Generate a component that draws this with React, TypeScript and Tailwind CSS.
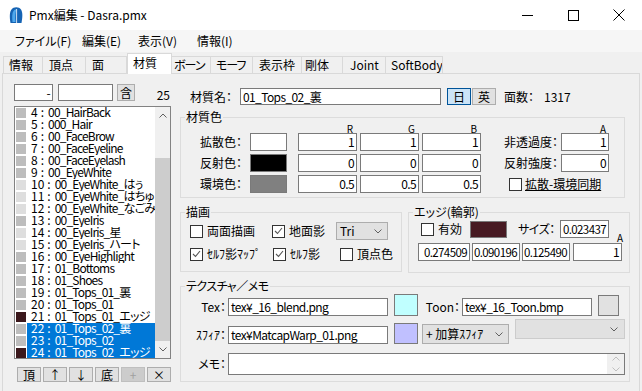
import type { ReactNode } from 'react'

type Mat = { n: number; name: string; sw: string; sel?: boolean }

const MATS: Mat[] = [
  { n: 4, name: '00_HairBack', sw: 'bg-[#bdbdbd]' },
  { n: 5, name: '000_Hair', sw: 'bg-[#bdbdbd]' },
  { n: 6, name: '00_FaceBrow', sw: 'bg-[#bdbdbd]' },
  { n: 7, name: '00_FaceEyeline', sw: 'bg-[#bdbdbd]' },
  { n: 8, name: '00_FaceEyelash', sw: 'bg-[#bdbdbd]' },
  { n: 9, name: '00_EyeWhite', sw: 'bg-[#bdbdbd]' },
  { n: 10, name: '00_EyeWhite_はぅ', sw: 'bg-[#dedede]' },
  { n: 11, name: '00_EyeWhite_はちゅ目', sw: 'bg-[#dedede]' },
  { n: 12, name: '00_EyeWhite_なごみ', sw: 'bg-[#dedede]' },
  { n: 13, name: '00_EyeIris', sw: 'bg-[#bdbdbd]' },
  { n: 14, name: '00_EyeIris_星', sw: 'bg-[#dedede]' },
  { n: 15, name: '00_EyeIris_ハート', sw: 'bg-[#dedede]' },
  { n: 16, name: '00_EyeHighlight', sw: 'bg-[#bdbdbd]' },
  { n: 17, name: '01_Bottoms', sw: 'bg-[#bdbdbd]' },
  { n: 18, name: '01_Shoes', sw: 'bg-[#bdbdbd]' },
  { n: 19, name: '01_Tops_01_裏', sw: 'bg-[#bdbdbd]' },
  { n: 20, name: '01_Tops_01', sw: 'bg-[#bdbdbd]' },
  { n: 21, name: '01_Tops_01_エッジ', sw: 'bg-[#3b181c]' },
  { n: 22, name: '01_Tops_02_裏', sw: 'bg-[#bdbdbd]', sel: true },
  { n: 23, name: '01_Tops_02', sw: 'bg-[#bdbdbd]', sel: true },
  { n: 24, name: '01_Tops_02_エッジ', sw: 'bg-[#3b181c]', sel: true },
]

const TABS = [
  { t: '情報', w: 'w-[40px] pl-[5px]' },
  { t: '頂点', w: 'w-[43px] pl-[6px]' },
  { t: '面', w: 'w-[41px] pl-[6px]' },
  { t: '材質', w: 'w-[45px] pl-[5px]', sel: true },
  { t: 'ボーン', w: 'w-[39px] pl-[2px] tracking-[-1px]' },
  { t: 'モーフ', w: 'w-[42px] pl-[5px] tracking-[-1px]' },
  { t: '表示枠', w: 'w-[49px] pl-[6px]' },
  { t: '剛体', w: 'w-[41px] pl-[3px]' },
  { t: 'Joint', w: 'w-[43px] pl-[7px]' },
  { t: 'SoftBody', w: 'w-[57px] pl-[5px]' },
]

function Chevron({ up, color = '#606060' }: { up?: boolean; color?: string }) {
  return (
    <svg width="8" height="5" viewBox="0 0 8 5">
      <path d={up ? 'M0.5 4.5 L4 1 L7.5 4.5' : 'M0.5 0.5 L4 4 L7.5 0.5'} fill="none" stroke={color} />
    </svg>
  )
}

function Field({ className = '', right, children }: { className?: string; right?: boolean; children?: ReactNode }) {
  return (
    <div
      className={`border border-[#7a7a7a] bg-white flex items-center overflow-hidden whitespace-nowrap shrink-0 tracking-[-0.6px] ${right ? 'justify-end pr-[2px]' : 'pl-[2px]'} ${className}`}
    >
      {children}
    </div>
  )
}

function Btn({ className = '', children }: { className?: string; children?: ReactNode }) {
  return (
    <div className={`border border-[#adadad] bg-[#e1e1e1] flex items-center justify-center shrink-0 ${className}`}>
      {children}
    </div>
  )
}

function Check({ on }: { on?: boolean }) {
  return (
    <span className="w-[13px] h-[13px] border border-[#333333] bg-white flex items-center justify-center shrink-0">
      {on && (
        <svg width="9" height="8" viewBox="0 0 9 8">
          <path d="M1 4 L3.5 6.5 L8 1" fill="none" stroke="#555555" strokeWidth="1.1" />
        </svg>
      )}
    </span>
  )
}

function Combo({ className = '', children }: { className?: string; children?: ReactNode }) {
  return (
    <div className={`border border-[#adadad] bg-[#e1e1e1] flex items-center pl-[3px] pr-[5px] shrink-0 ${className}`}>
      <span className="flex-1 whitespace-nowrap">{children}</span>
      <Chevron />
    </div>
  )
}

function Swatch({ className = '' }: { className?: string }) {
  return <div className={`border border-[#7a7a7a] shrink-0 ${className}`} />
}

function TitleBar() {
  return (
    <div className="h-[30px] bg-white flex items-center shrink-0">
      <svg className="ml-[8px]" width="16" height="18" viewBox="0 0 16 18">
        <path d="M2.5 17 C1.5 11 1.5 6 3.5 3.5 C5.5 0.5 11 0.5 13 3.5 C15 6.5 14.5 12 13.5 17 Z" fill="#1664b4" />
        <path d="M4.5 16 C4 11 4 7 5.5 5 C6.5 3.5 8 3.3 8.6 3.6 C7.3 6 7 11 7.5 16 Z" fill="#4fa8ec" />
        <path d="M8.6 3 L8.6 17" stroke="#ffffff" strokeWidth="0.8" />
      </svg>
      <span className="ml-[5px]">Pmx編集 - Dasra.pmx</span>
      <div className="ml-auto flex h-full">
        <div className="w-[46px] flex items-center justify-center">
          <svg width="11" height="11" viewBox="0 0 11 11">
            <path d="M0 5.5 H11" stroke="#000" />
          </svg>
        </div>
        <div className="w-[46px] flex items-center justify-center">
          <svg width="11" height="11" viewBox="0 0 11 11">
            <rect x="0.5" y="0.5" width="10" height="10" fill="none" stroke="#000" />
          </svg>
        </div>
        <div className="w-[46px] flex items-center justify-center">
          <svg width="12" height="12" viewBox="0 0 12 12">
            <path d="M0.5 0.5 L11.5 11.5 M11.5 0.5 L0.5 11.5" stroke="#000" />
          </svg>
        </div>
      </div>
    </div>
  )
}

function MenuBar() {
  return (
    <div className="h-[22px] bg-[#f6f6f6] flex items-center shrink-0 pl-[8px]">
      <span className="w-[67px] pl-[7px]">ファイル(F)</span>
      <span className="w-[56px] pl-[7px]">編集(E)</span>
      <span className="w-[59px] pl-[7px]">表示(V)</span>
      <span className="w-[60px] pl-[7px]">情報(I)</span>
    </div>
  )
}

function TabStrip() {
  return (
    <div className="h-[21px] flex items-end pl-[3px] shrink-0">
      {TABS.map((tab) =>
        tab.sel ? (
          <div
            key={tab.t}
            className={`${tab.w} h-[21px] -mb-px relative z-10 bg-white border border-b-0 border-[#d9d9d9] pt-[2px] whitespace-nowrap`}
          >
            {tab.t}
          </div>
        ) : (
          <div
            key={tab.t}
            className={`${tab.w} h-[17px] border border-b-0 border-l-0 first:border-l border-[#d9d9d9] leading-[16px] whitespace-nowrap overflow-hidden`}
          >
            {tab.t}
          </div>
        ),
      )}
    </div>
  )
}

function MaterialList() {
  return (
    <div className="ml-[11px] mt-[10px] w-[158px] flex flex-col shrink-0">
      <div className="flex items-center h-[17px]">
        <Field className="w-[39px] h-[17px]" right>
          -
        </Field>
        <Field className="ml-[5px] w-[55px] h-[17px]" />
        <Btn className="ml-[4px] w-[18px] h-[17px]">含</Btn>
        <span className="ml-auto mr-[2px] self-end leading-[12px]">25</span>
      </div>
      <div className="mt-[5px] w-[157px] h-[253px] border border-[#828282] bg-white flex">
        <div className="w-[140px] flex flex-col overflow-hidden">
          {MATS.map((m) => (
            <div key={m.n} className="h-[12px] flex items-center shrink-0">
              <span className={`ml-[1px] w-[10px] h-[10px] shrink-0 ${m.sw}`} />
              <span
                className={`ml-[1px] flex-1 h-[12px] pl-[4px] whitespace-nowrap overflow-hidden leading-[10px] ${m.sel ? 'bg-[#0078d7] text-white' : ''}`}
              >
                {m.n}
                <span className="ml-[3px] mr-[4px]">:</span>
                <span className="tracking-[-0.8px]">{m.name}</span>
              </span>
            </div>
          ))}
        </div>
        <div className="w-[15px] bg-[#f0f0f0] flex flex-col">
          <div className="h-[17px] flex items-center justify-center">
            <Chevron up />
          </div>
          <div className="h-[34px]" />
          <div className="flex-1 bg-[#cdcdcd]" />
          <div className="h-[17px] flex items-center justify-center">
            <Chevron />
          </div>
        </div>
      </div>
      <div className="mt-[8px] ml-[3px] flex gap-[2px]">
        <Btn className="w-[24px] h-[15px]">頂</Btn>
        <Btn className="w-[24px] h-[15px]">↑</Btn>
        <Btn className="w-[24px] h-[15px]">↓</Btn>
        <Btn className="w-[24px] h-[15px]">底</Btn>
        <div className="w-[24px] h-[15px] border border-[#bfbfbf] bg-[#cccccc] text-[#a0a0a0] flex items-center justify-center">+</div>
        <Btn className="w-[24px] h-[15px]">×</Btn>
      </div>
    </div>
  )
}

function ColorRow({ label, sw, vals, children }: { label: string; sw: string; vals: string[]; children: ReactNode }) {
  return (
    <div className="h-[18px] flex items-center">
      <span className="w-[61px] text-right">{label}</span>
      <Swatch className={`ml-[8px] w-[37px] h-[18px] ${sw}`} />
      <Field className="ml-[11px] w-[59px] h-[18px]" right>
        {vals[0]}
      </Field>
      <Field className="ml-[3px] w-[59px] h-[18px]" right>
        {vals[1]}
      </Field>
      <Field className="ml-[3px] w-[59px] h-[18px]" right>
        {vals[2]}
      </Field>
      {children}
    </div>
  )
}

function MaterialEditor() {
  return (
    <div className="ml-[8px] w-[450px] flex flex-col shrink-0">
      <div className="mt-[14px] h-[17px] flex items-center">
        <span className="ml-[10px] w-[48px]">材質名：</span>
        <Field className="ml-[2px] w-[201px] h-[17px]">01_Tops_02_裏</Field>
        <div className="ml-[6px] w-[24px] h-[17px] border border-[#005499] bg-[#cce4f7] flex items-center justify-center">日</div>
        <Btn className="ml-[1px] w-[24px] h-[17px]">英</Btn>
        <span className="ml-[8px]">面数：</span>
        <span className="ml-[10px]">1317</span>
      </div>

      <fieldset className="mt-[5px] w-[445px] h-[88px] min-w-0 border border-[#dcdcdc]">
        <legend className="ml-[4px] px-[1px] leading-[14px]">材質色</legend>
        <div className="h-[9px] flex text-[10px] leading-[9px]">
          <span className="ml-[117px] w-[59px] text-right pr-[4px]">R</span>
          <span className="ml-[3px] w-[59px] text-right pr-[4px]">G</span>
          <span className="ml-[3px] w-[59px] text-right pr-[4px]">B</span>
          <span className="ml-[80px] w-[48px] text-right pr-[3px]">A</span>
        </div>
        <ColorRow label="拡散色：" sw="bg-white" vals={['1', '1', '1']}>
          <span className="w-[77px] text-right">非透過度：</span>
          <Field className="ml-[3px] w-[48px] h-[18px]" right>
            1
          </Field>
        </ColorRow>
        <div className="mt-[3px]">
          <ColorRow label="反射色：" sw="bg-black" vals={['0', '0', '0']}>
            <span className="w-[77px] text-right">反射強度：</span>
            <Field className="ml-[3px] w-[48px] h-[18px]" right>
              0
            </Field>
          </ColorRow>
        </div>
        <div className="mt-[3px]">
          <ColorRow label="環境色：" sw="bg-[#808080]" vals={['0.5', '0.5', '0.5']}>
            <span className="ml-[28px]">
              <Check />
            </span>
            <span className="ml-[3px] underline">拡散-環境同期</span>
          </ColorRow>
        </div>
      </fieldset>

      <div className="mt-[7px] flex items-start">
        <fieldset className="w-[222px] h-[67px] min-w-0 border border-[#dcdcdc] shrink-0">
          <legend className="ml-[4px] px-[1px] leading-[14px]">描画</legend>
          <div className="mt-[3px] h-[18px] flex items-center">
            <div className="ml-[9px] w-[82px] flex items-center">
              <Check />
              <span className="ml-[4px]">両面描画</span>
            </div>
            <div className="w-[64px] flex items-center">
              <Check on />
              <span className="ml-[4px]">地面影</span>
            </div>
            <Combo className="w-[52px] h-[18px]">Tri</Combo>
          </div>
          <div className="mt-[5px] h-[18px] flex items-center">
            <div className="ml-[9px] w-[83px] flex items-center">
              <Check on />
              <span className="ml-[4px] whitespace-nowrap">ｾﾙﾌ影ﾏｯﾌﾟ</span>
            </div>
            <div className="w-[67px] flex items-center">
              <Check on />
              <span className="ml-[4px]">ｾﾙﾌ影</span>
            </div>
            <div className="flex items-center">
              <Check />
              <span className="ml-[4px]">頂点色</span>
            </div>
          </div>
        </fieldset>

        <fieldset className="ml-[6px] w-[222px] h-[68px] min-w-0 border border-[#dcdcdc] shrink-0">
          <legend className="ml-[4px] px-[1px] leading-[14px]">エッジ(輪郭)</legend>
          <div className="mt-[1px] h-[18px] flex items-center">
            <div className="ml-[12px] w-[49px] flex items-center">
              <Check />
              <span className="ml-[4px]">有効</span>
            </div>
            <Swatch className="w-[37px] h-[17px] bg-[#471a22]" />
            <span className="ml-[11px] w-[40px] whitespace-nowrap tracking-[-0.5px]">サイズ：</span>
            <Field className="ml-[2px] w-[49px] h-[18px] text-[11.5px]" right>
              0.023437
            </Field>
            <span className="ml-[8px] self-end -mb-[4px] text-[10px] leading-[9px]">A</span>
          </div>
          <div className="mt-[5px] h-[18px] flex items-center">
            <Field className="ml-[9px] w-[52px] h-[18px] text-[11.5px]" right>
              0.274509
            </Field>
            <Field className="ml-[2px] w-[48px] h-[18px] text-[11.5px]" right>
              0.090196
            </Field>
            <Field className="ml-[2px] w-[48px] h-[18px] text-[11.5px]" right>
              0.125490
            </Field>
            <Field className="ml-[3px] w-[49px] h-[18px]" right>
              1
            </Field>
          </div>
        </fieldset>
      </div>

      <fieldset className="mt-[6px] w-[450px] h-[103px] min-w-0 border border-[#dcdcdc]">
        <legend className="ml-[4px] px-[1px] leading-[14px] tracking-[-0.5px]">テクスチャ／メモ</legend>
        <div className="mt-[1px] h-[22px] flex items-end">
          <span className="w-[45px] h-[18px] flex items-center justify-end">Tex：</span>
          <Field className="ml-[2px] w-[160px] h-[18px]">tex¥_16_blend.png</Field>
          <Swatch className="ml-[6px] w-[24px] h-[22px] bg-[#c0ffff]" />
          <span className="w-[42px] h-[18px] flex items-center justify-end">Toon：</span>
          <Field className="ml-[2px] w-[130px] h-[18px]">tex¥_16_Toon.bmp</Field>
          <Swatch className="ml-[6px] w-[21px] h-[21px] bg-[#e1e1e1]" />
        </div>
        <div className="mt-[6px] h-[22px] flex items-end">
          <span className="w-[45px] h-[18px] flex items-center justify-end">ｽﾌｨｱ：</span>
          <Field className="ml-[2px] w-[160px] h-[18px]">tex¥MatcapWarp_01.png</Field>
          <Swatch className="ml-[6px] w-[24px] h-[21px] bg-[#c0c0ff]" />
          <Combo className="ml-[4px] w-[87px] h-[20px]">+ 加算ｽﾌｨｱ</Combo>
          <div className="ml-[6px] w-[110px] h-[20px] self-start -mt-[3px] border border-[#cccccc] bg-[#e1e1e1] flex items-center justify-end pr-[6px]">
            <Chevron />
          </div>
        </div>
        <div className="mt-[9px] h-[22px] flex items-center">
          <span className="w-[45px] text-right">メモ：</span>
          <div className="ml-[2px] w-[397px] h-[22px] border border-[#7a7a7a] bg-white flex justify-end">
            <div className="w-[17px] bg-[#f0f0f0] flex flex-col items-center justify-center gap-[6px]">
              <Chevron up color="#bfbfbf" />
              <Chevron color="#bfbfbf" />
            </div>
          </div>
        </div>
      </fieldset>
    </div>
  )
}

export default function App() {
  return (
    <div className="w-[642px] h-[391px] overflow-hidden bg-[#f0f0f0] text-[12px] leading-[14px] text-black flex flex-col [font-family:'Noto_Sans_CJK_JP',sans-serif] [font-feature-settings:'palt']">
      <TitleBar />
      <MenuBar />
      <TabStrip />
      <div className="mx-[2px] h-[330px] shrink-0 border border-[#d9d9d9] flex">
        <MaterialList />
        <MaterialEditor />
      </div>
    </div>
  )
}
